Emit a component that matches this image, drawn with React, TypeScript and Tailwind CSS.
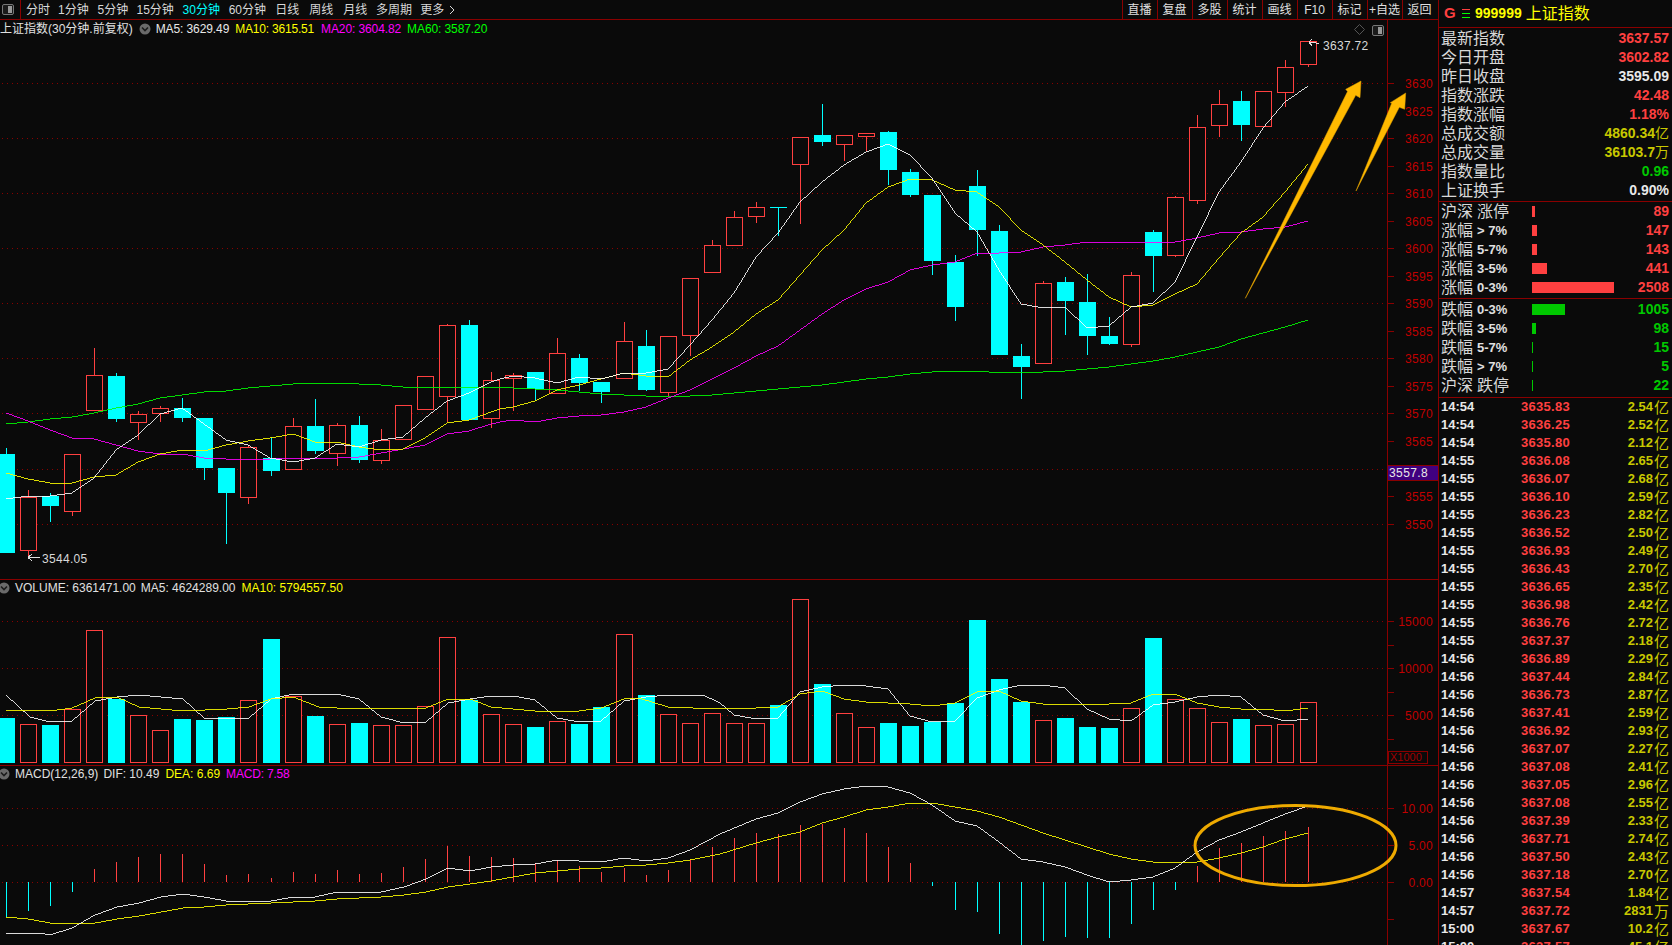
import React from "react";

type Candle = [number, 0 | 1, number, number, number, number];
// [center x, 1 = up (hollow red) / 0 = down (solid cyan), body top, body bottom, high, low]
const candles: Candle[] = [
  [6,0,454,553,448,553],[28,1,497,550,490,557],[50,0,496,506,493,522],[72,1,454,511,454,516],[94,1,375,410,348,410],
  [116,0,376,419,373,422],[138,1,414,422,411,440],[160,1,408,413,406,422],[182,0,408,418,398,422],[204,0,418,468,418,480],
  [226,0,468,493,468,544],[248,1,447,497,445,504],[271,0,458,471,437,476],[293,1,426,469,418,469],[315,0,426,451,399,454],
  [337,1,425,453,423,466],[359,0,425,460,416,463],[381,1,440,460,429,464],[403,1,405,439,405,440],[425,1,376,409,376,409],
  [447,1,325,396,324,422],[469,0,325,420,320,420],[491,1,380,418,372,428],[513,1,375,378,373,411],[535,0,372,389,372,401],
  [557,1,353,393,338,393],[579,0,358,383,354,391],[601,0,382,392,382,403],[624,1,341,378,322,378],[646,0,346,390,330,391],
  [668,1,336,392,336,396],[690,1,278,335,278,356],[712,1,245,272,240,272],[734,1,217,245,211,245],[756,1,207,216,202,223],
  [778,0,207,208,207,236],[800,1,137,164,137,224],[822,0,135,142,104,146],[844,1,135,144,135,161],[866,1,133,136,133,151],
  [888,0,132,170,131,185],[910,0,172,195,169,197],[932,0,195,261,195,275],[955,0,262,307,255,321],[977,0,186,230,170,256],
  [999,0,231,355,225,355],[1021,0,356,367,344,399],[1043,1,283,363,281,363],[1065,0,282,301,277,335],[1087,0,302,336,274,355],
  [1109,0,336,344,317,345],[1131,1,275,344,272,347],[1153,0,232,256,230,292],[1175,1,197,255,196,257],[1197,1,127,200,115,204],
  [1219,1,104,125,90,137],[1241,0,101,125,91,141],[1263,1,91,126,91,126],[1285,1,67,92,60,107],[1308,1,41,64,41,67],
];

const volTops = [718,724,725,709,630,699,715,730,719,720,717,700,639,696,716,724,723,725,725,706,637,700,714,724,727,721,724,707,634,695,714,723,713,723,723,705,599,684,713,727,723,726,722,703,620,679,702,720,718,727,728,708,638,699,708,722,719,725,724,702];
const macdEnds = [917,911,906,892,869,862,857,854,854,864,875,874,878,872,874,870,874,873,867,859,846,856,857,858,863,860,866,872,868,875,870,859,847,838,833,834,825,824,828,833,847,863,886,910,912,934,945,941,937,938,938,924,910,890,866,848,843,836,831,827];

const ma5 = "6,499 28,496 50,496 72,493 94,478 116,450 138,435 160,414 182,408 204,424 226,440 248,445 270,458 293,462 315,458 337,444 359,447 381,440 403,437 425,418 447,401 469,393 491,382 500,379 513,376 535,378 557,383 579,377 601,379 624,373 646,373 668,369 690,345 712,320 734,293 756,257 778,233 800,202 822,182 844,165 866,152 888,144 910,155 932,178 955,213 977,232 999,270 1021,304 1043,308 1065,307 1087,328 1109,326 1131,307 1153,303 1175,282 1197,237 1219,192 1241,162 1263,128 1285,102 1308,86";
const ma10 = "6,473 28,479 50,483 72,483 94,477 116,475 138,462 160,454 182,450 204,451 226,445 248,441 270,438 293,434 315,442 337,442 359,447 381,450 403,449 425,438 447,423 469,420 491,412 500,409 513,407 535,401 557,390 579,385 601,379 624,373 646,376 668,377 690,360 712,347 734,332 756,314 778,300 800,275 822,250 844,230 866,203 888,187 910,179 932,180 955,190 977,192 999,207 1021,230 1043,245 1065,262 1087,280 1109,297 1131,307 1153,305 1175,294 1197,284 1219,258 1241,233 1263,217 1285,192 1308,164";
const ma20 = "6,413 28,421 50,430 72,438 94,439 116,445 138,451 160,454 182,454 204,458 226,459 248,460 270,459 293,458 315,459 337,458 359,457 381,453 403,449 425,445 447,434 469,431 491,424 500,422 513,420 535,422 557,418 579,416 601,415 624,412 646,407 668,398 690,390 712,379 734,368 756,356 778,346 800,330 822,314 844,300 866,289 888,282 910,270 932,265 955,262 977,253 999,253 1021,252 1043,247 1065,245 1087,242 1109,242 1131,242 1153,242 1175,242 1197,238 1219,233 1241,232 1263,229 1285,227 1308,221";
const ma60 = "6,424 28,422 50,419 72,417 94,413 116,408 138,404 160,398 182,395 204,392 226,391 248,388 270,386 293,384 315,383 337,383 359,384 381,385 403,387 425,387 447,387 469,387 491,387 513,388 535,389 557,390 579,392 601,394 624,395 646,396 668,397 690,396 712,395 734,393 756,391 778,389 800,387 822,385 844,382 866,379 888,377 910,374 932,372 966,371 989,372 1021,373 1043,372 1065,371 1087,369 1109,367 1131,364 1153,361 1175,357 1197,352 1219,347 1241,339 1263,333 1285,327 1308,320";

const volMa5 = "6,695 30,717 50,722 72,721 95,701 117,697 139,695 161,697 183,699 204,718 227,719 249,718 271,699 293,694 337,694 359,699 381,717 404,723 426,722 448,703 470,699 491,696 513,696 535,700 557,718 579,722 601,721 624,701 646,697 668,695 703,695 720,703 734,715 756,719 778,718 800,692 822,687 844,685 866,686 888,689 910,716 932,722 955,721 977,698 999,690 1021,685 1043,685 1065,688 1087,709 1109,719 1131,721 1153,705 1175,702 1197,697 1219,695 1241,697 1263,715 1285,721 1308,719";
const volMa10 = "6,710 50,711 72,708 95,698 117,697 139,707 161,709 183,711 227,709 249,707 271,699 293,697 319,707 337,708 395,709 426,708 448,699 470,699 491,707 513,709 535,711 579,711 601,708 624,699 639,698 668,707 693,708 756,708 778,707 800,694 822,691 844,699 866,702 910,704 932,706 955,703 977,692 999,691 1021,701 1043,704 1109,704 1131,703 1153,694 1175,694 1197,703 1219,707 1241,709 1263,709 1285,711 1308,708";

const dif = "6,933 40,933 50,935 72,928 95,915 117,907 139,903 161,897 183,894 204,897 226,901 271,901 293,897 315,897 337,892 359,893 381,892 404,887 426,879 448,868 470,871 491,867 513,865 535,864 557,860 579,861 601,862 624,858 646,861 668,858 690,850 720,834 756,819 778,813 800,802 822,794 844,789 866,786 888,787 910,793 932,805 955,821 977,826 999,842 1021,859 1043,862 1065,867 1087,875 1109,882 1131,880 1153,877 1175,868 1197,852 1219,840 1241,832 1263,823 1285,814 1308,806";
const dea = "6,917 28,919 50,923 72,924 95,923 117,919 139,916 161,912 183,908 204,907 226,905 248,904 271,903 293,902 315,901 337,899 359,898 381,897 404,895 426,892 448,887 470,884 491,881 513,877 535,873 557,871 579,869 601,868 624,866 646,865 668,863 690,860 720,854 756,843 778,837 800,832 822,823 844,817 866,810 888,807 910,803 932,803 955,807 977,811 999,817 1021,825 1043,833 1065,840 1087,847 1109,854 1131,859 1153,862 1175,863 1197,862 1219,858 1241,853 1263,847 1285,839 1308,833";

const priceLabels: [string, number][] = [
  ["3630",83],["3625",111],["3620",138],["3615",166],["3610",193],["3605",221],["3600",248],["3595",276],["3590",303],
  ["3585",331],["3580",358],["3575",386],["3570",413],["3565",441],["3555",496],["3550",524],
];

const stats: [string, string, string, string?][] = [
  ["最新指数","3637.57","text-[#ff4040]"],["今日开盘","3602.82","text-[#ff4040]"],["昨日收盘","3595.09","text-[#e8e8e8]"],
  ["指数涨跌","42.48","text-[#ff4040]"],["指数涨幅","1.18%","text-[#ff4040]"],["总成交额","4860.34","text-[#c8c800]","亿"],
  ["总成交量","36103.7","text-[#c8c800]","万"],["指数量比","0.96","text-[#00c800]"],["上证换手","0.90%","text-[#e8e8e8]"],
];

const upRows: [string, string, string, string][] = [
  ["沪深","涨停","w-[3px]","89"],["涨幅","> 7%","w-[5px]","147"],["涨幅","5-7%","w-[5px]","143"],["涨幅","3-5%","w-[15px]","441"],["涨幅","0-3%","w-[82px]","2508"],
];
const downRows: [string, string, string, string][] = [
  ["跌幅","0-3%","w-[33px]","1005"],["跌幅","3-5%","w-[4px]","98"],["跌幅","5-7%","w-[1px]","15"],["跌幅","> 7%","w-[1px]","5"],["沪深","跌停","w-[1px]","22"],
];

const ticks: [string, string, string, string][] = [
  ["14:54","3635.83","2.54","亿"],["14:54","3636.25","2.52","亿"],["14:54","3635.80","2.12","亿"],["14:55","3636.08","2.65","亿"],
  ["14:55","3636.07","2.68","亿"],["14:55","3636.10","2.59","亿"],["14:55","3636.23","2.82","亿"],["14:55","3636.52","2.50","亿"],
  ["14:55","3636.93","2.49","亿"],["14:55","3636.43","2.70","亿"],["14:55","3636.65","2.35","亿"],["14:55","3636.98","2.42","亿"],
  ["14:55","3636.76","2.72","亿"],["14:55","3637.37","2.18","亿"],["14:56","3636.89","2.29","亿"],["14:56","3637.44","2.84","亿"],
  ["14:56","3636.73","2.87","亿"],["14:56","3637.41","2.59","亿"],["14:56","3636.92","2.93","亿"],["14:56","3637.07","2.27","亿"],
  ["14:56","3637.08","2.41","亿"],["14:56","3637.05","2.96","亿"],["14:56","3637.08","2.55","亿"],["14:56","3637.39","2.33","亿"],
  ["14:56","3637.71","2.74","亿"],["14:56","3637.50","2.43","亿"],["14:56","3637.18","2.70","亿"],["14:57","3637.54","1.84","亿"],
  ["14:57","3637.72","2831","万"],["15:00","3637.67","10.2","亿"],["15:00","3637.57","45.1","亿"],
];

const tabs: [string, string][] = [
  ["分时","ml-0"],["1分钟","ml-[8px]"],["5分钟","ml-[8.8px]"],["15分钟","ml-[8.3px]"],["30分钟","ml-[8.7px]"],["60分钟","ml-[8.8px]"],
  ["日线","ml-[9.1px]"],["周线","ml-[10px]"],["月线","ml-[10px]"],["多周期","ml-[8.7px]"],["更多","ml-[8.3px]"],
];
const tools = ["直播","复盘","多股","统计","画线","F10","标记","+自选","返回"];

const RED = "#ff4040";
const CYAN = "#00ffff";
const AXIS = "#c00000";
const GRID = "#8a0000";

const Line = ({ p, c }: { p: string; c: string }) => (
  <polyline points={p} fill="none" stroke={c} strokeWidth={0.85} shapeRendering="crispEdges" />
);
const Dots = ({ y, x2 = 1387 }: { y: number; x2?: number }) => (
  <line x1={2} x2={x2} y1={y + 0.5} y2={y + 0.5} stroke={GRID} strokeDasharray="1 4" shapeRendering="crispEdges" />
);
const Tick = ({ y, l = 6 }: { y: number; l?: number }) => (
  <line x1={1388} x2={1388 + l} y1={y + 0.5} y2={y + 0.5} stroke={GRID} shapeRendering="crispEdges" />
);
const AxisText = ({ y, t, x = 1433 }: { y: number; t: string; x?: number }) => (
  <text x={x} y={y + 4.5} textAnchor="end" fill={AXIS} fontSize={12} letterSpacing={0.3} fontFamily="'Liberation Sans', sans-serif">{t}</text>
);
const AxisRule = ({ y1, y2 }: { y1: number; y2: number }) => (
  <line x1={1387.5} x2={1387.5} y1={y1} y2={y2} stroke={GRID} shapeRendering="crispEdges" />
);

const Chevron = () => (
  <svg width="12" height="12" viewBox="0 0 12 12" className="shrink-0">
    <circle cx="6" cy="6" r="5.5" fill="#6a6a6a" />
    <path d="M3 4.5 L6 7.5 L9 4.5" fill="none" stroke="#1c1c1c" strokeWidth="1.6" />
  </svg>
);
const PanelToggle = () => (
  <svg width="12" height="11" viewBox="0 0 12 11" className="shrink-0">
    <rect x="0.5" y="0.5" width="11" height="10" rx="1.5" fill="#1a1a1a" stroke="#777" />
    <rect x="6" y="2" width="4" height="7" fill="#999" />
  </svg>
);

function MainChart() {
  const gridYs = [83, 138, 193, 248, 303, 358, 413, 469, 524];
  return (
    <svg width="1438" height="560" viewBox="0 20 1438 560" className="absolute inset-0">
      {gridYs.map((y) => <Dots key={y} y={y} />)}
      <AxisRule y1={20} y2={580} />
      {priceLabels.map(([t, y]) => <Tick key={t} y={y} />)}
      <Tick y={469} />
      {priceLabels.map(([t, y]) => <AxisText key={t} t={t} y={y} />)}
      {candles.map(([c, up, t, b, h, l], i) => {
        const col = up ? RED : CYAN;
        return (
          <g key={i} shapeRendering="crispEdges">
            <line x1={c + 0.5} x2={c + 0.5} y1={h} y2={l} stroke={col} />
            {up ? (
              <rect x={c - 7.5} y={t + 0.5} width={16} height={b - t} fill="#0a0a0a" stroke={RED} />
            ) : (
              <rect x={c - 8} y={t} width={17} height={Math.max(b - t, 1)} fill={CYAN} />
            )}
          </g>
        );
      })}
      <Line p={ma60} c="#00ff00" />
      <Line p={ma20} c="#ff00ff" />
      <Line p={ma10} c="#ffff00" />
      <Line p={ma5} c="#ffffff" />
      <path d="M1319 44 L1313 42 L1309 42 M1309 42 L1312 39 M1309 42 L1312 46" fill="none" stroke="#e0e0e0" strokeWidth="1" shapeRendering="crispEdges" />
      <text x={1323} y={50} fill="#d8d8d8" fontSize={12} letterSpacing={0.3} fontFamily="'Liberation Sans', sans-serif">3637.72</text>
      <path d="M40 557.5 L28 557.5 M28 557.5 L32 554 M28 557.5 L32 561" fill="none" stroke="#e0e0e0" strokeWidth="1" shapeRendering="crispEdges" />
      <text x={42} y={563} fill="#d8d8d8" fontSize={12} letterSpacing={0.3} fontFamily="'Liberation Sans', sans-serif">3544.05</text>
      <path d="M1359.5 24.5 L1364.5 29.5 L1359.5 34.5 L1354.5 29.5 Z" fill="none" stroke="#555" />
      <polygon points="1245.3,298.3 1347.5,91.5 1345.7,89.3 1361,81 1360,97.7 1355.7,95.3" fill="#ffb900" stroke="#e0a000" strokeWidth="0.5" />
      <polygon points="1356,191 1391.7,103.3 1390.3,102.7 1405.7,93 1404.7,109.3 1399.3,107.3" fill="#ffb900" stroke="#e0a000" strokeWidth="0.5" />
    </svg>
  );
}

function VolumeChart() {
  return (
    <svg width="1438" height="186" viewBox="0 580 1438 186" className="absolute inset-0">
      {[621, 668, 715].map((y) => <Dots key={y} y={y} />)}
      <AxisRule y1={580} y2={765} />
      {[621, 645, 668, 692, 715, 739].map((y) => <Tick key={y} y={y} />)}
      <AxisText t="15000" y={621} />
      <AxisText t="10000" y={668} />
      <AxisText t="5000" y={715} />
      {candles.map(([c, up], i) =>
        up ? (
          <rect key={i} x={c - 7.5} y={volTops[i] + 0.5} width={16} height={762 - volTops[i]} fill="#0a0a0a" stroke={RED} shapeRendering="crispEdges" />
        ) : (
          <rect key={i} x={c - 8} y={volTops[i]} width={17} height={763 - volTops[i]} fill={CYAN} shapeRendering="crispEdges" />
        )
      )}
      <Line p={volMa5} c="#ffffff" />
      <Line p={volMa10} c="#ffff00" />
      <rect x={1388.5} y={751.5} width={39} height={12} fill="#0a0a0a" stroke={GRID} shapeRendering="crispEdges" />
      <text x={1390} y={761} fill="#a00000" fontSize={11} fontFamily="'Liberation Sans', sans-serif">X1000</text>
    </svg>
  );
}

function MacdChart() {
  return (
    <svg width="1438" height="179" viewBox="0 766 1438 179" className="absolute inset-0">
      {[808, 845, 882].map((y) => <Dots key={y} y={y} />)}
      <AxisRule y1={766} y2={945} />
      {[808, 845, 882, 919].map((y) => <Tick key={y} y={y} />)}
      <AxisText t="10.00" y={808} />
      <AxisText t="5.00" y={845} />
      <AxisText t="0.00" y={882} />
      {candles.map(([c], i) => (
        <line key={i} x1={c + 0.5} x2={c + 0.5} y1={882} y2={macdEnds[i]} stroke={macdEnds[i] > 882 ? CYAN : RED} shapeRendering="crispEdges" />
      ))}
      <Line p={dea} c="#ffff00" />
      <Line p={dif} c="#ffffff" />
      <ellipse cx={1295.5} cy={845.5} rx={100.5} ry={40} fill="none" stroke="#eeaa00" strokeWidth={3} />
    </svg>
  );
}

const Legend = ({ children, h }: { children: React.ReactNode; h: string }) => (
  <div className={`absolute left-0 top-0 flex items-center whitespace-nowrap text-[12px] ${h}`}>{children}</div>
);

export default function App() {
  return (
    <div className="relative flex h-[945px] w-[1672px] overflow-hidden bg-[#0a0a0a] font-['Liberation_Sans','Noto_Sans_CJK_SC',sans-serif] text-[#e0e0e0]">
      <div className="flex w-[1438px] shrink-0 flex-col">
        <div className="flex h-[20px] shrink-0 items-center border-b border-[#8a0000] text-[12px]">
          <div className="flex h-full w-[21px] shrink-0 items-center border-r border-[#8a0000] pl-[2px]">
            <PanelToggle />
          </div>
          <div className="ml-[5px] flex items-center">
            {tabs.map(([t, m]) => (
              <span key={t} className={`${m} ${t === "30分钟" ? "text-[#00ffff]" : "text-[#d8d8d8]"}`}>{t}</span>
            ))}
            <svg width="6" height="10" viewBox="0 0 6 10" className="ml-[5px]">
              <path d="M1 1 L5 5 L1 9" fill="none" stroke="#d8d8d8" />
            </svg>
          </div>
          <div className="ml-auto flex h-full">
            {tools.map((t) => (
              <span key={t} className="flex h-full w-[35px] items-center justify-center border-l border-[#8a0000] text-[#e0e0e0]">{t}</span>
            ))}
            <span className="w-[1.5px]" />
          </div>
        </div>

        <div className="relative h-[560px] shrink-0 border-b border-[#8a0000]">
          <MainChart />
          <Legend h="h-[18px]">
            <span className="text-[#e0e0e0]">上证指数(30分钟.前复权)</span>
            <span className="ml-[6px] mr-[5px]"><Chevron /></span>
            <span className="tracking-[-0.1px] text-[#e8e8e8]">MA5: 3629.49</span>
            <span className="ml-[6px] tracking-[-0.2px] text-[#ffff00]">MA10: 3615.51</span>
            <span className="ml-[7px] tracking-[-0.1px] text-[#ff00ff]">MA20: 3604.82</span>
            <span className="ml-[6px] tracking-[-0.1px] text-[#00ff00]">MA60: 3587.20</span>
          </Legend>
          <div className="absolute left-[1372px] top-[5px]"><PanelToggle /></div>
        </div>

        <div className="relative h-[186px] shrink-0 border-b border-[#8a0000]">
          <VolumeChart />
          <Legend h="h-[16px]">
            <span className="-ml-[2px] mr-[5px]"><Chevron /></span>
            <span className="text-[#e0e0e0]">VOLUME: 6361471.00</span>
            <span className="ml-[5px] text-[#e0e0e0]">MA5: 4624289.00</span>
            <span className="ml-[6px] text-[#ffff00]">MA10: 5794557.50</span>
          </Legend>
        </div>

        <div className="relative flex-1">
          <MacdChart />
          <Legend h="h-[16px]">
            <span className="-ml-[2px] mr-[5px]"><Chevron /></span>
            <span className="text-[#e0e0e0]">MACD(12,26,9)</span>
            <span className="ml-[5px] text-[#e0e0e0]">DIF: 10.49</span>
            <span className="ml-[6px] text-[#ffff00]">DEA: 6.69</span>
            <span className="ml-[6px] tracking-[-0.2px] text-[#ff00ff]">MACD: 7.58</span>
          </Legend>
        </div>
      </div>

      <div className="flex w-[234px] shrink-0 flex-col overflow-hidden border-l border-[#8a0000]">
        <div className="flex h-[28px] shrink-0 items-center border-b border-[#8a0000] pl-[5px]">
          <span className="w-[13px] text-[15px] font-bold text-[#ff4040]">G</span>
          <svg width="8" height="10" viewBox="0 0 8 10" className="ml-[5px]">
            <rect x="0" y="0" width="8" height="1" fill="#ff4040" />
            <rect x="0" y="4" width="8" height="1" fill="#00ff00" />
            <rect x="0" y="8" width="8" height="1" fill="#00ff00" />
          </svg>
          <span className="ml-[5px] text-[14px] font-bold text-[#ffff00]">999999</span>
          <span className="ml-[4px] text-[16px] text-[#ffff00]">上证指数</span>
        </div>

        <div className="flex h-[174px] shrink-0 flex-col border-b border-[#8a0000] pt-[1px]">
          {stats.map(([l, v, c, u]) => (
            <div key={l} className="flex h-[19px] shrink-0 items-center justify-between pl-[2px] pr-[3px]">
              <span className="text-[16px] leading-[19px] text-[#d8d8d8]">{l}</span>
              <span className={`flex items-center text-[14px] font-bold ${c}`}>
                {v}
                {u && <span className="text-[14px] font-normal">{u}</span>}
              </span>
            </div>
          ))}
        </div>

        <div className="h-[97px] shrink-0 border-b border-[#8a0000]">
          {upRows.map(([a, b, w, n]) => (
            <div key={a + b} className="flex h-[19px] items-center pl-[2px] pr-[3px]">
              <span className="w-[36px] text-[16px] text-[#d8d8d8]">{a}</span>
              <span className={`w-[55px] ${/[涨跌]/.test(b) ? "text-[16px] text-[#d8d8d8]" : "text-[13px] font-bold text-[#e0e0e0]"}`}>{b}</span>
              <span className={`h-[11px] ${w} bg-[#ff4040]`} />
              <span className="ml-auto text-[14px] font-bold text-[#ff4040]">{n}</span>
            </div>
          ))}
        </div>

        <div className="h-[99px] shrink-0 border-b border-[#8a0000] pt-[1px]">
          {downRows.map(([a, b, w, n]) => (
            <div key={a + b} className="flex h-[19px] items-center pl-[2px] pr-[3px]">
              <span className="w-[36px] text-[16px] text-[#d8d8d8]">{a}</span>
              <span className={`w-[55px] ${/[涨跌]/.test(b) ? "text-[16px] text-[#d8d8d8]" : "text-[13px] font-bold text-[#e0e0e0]"}`}>{b}</span>
              <span className={`h-[11px] ${w} bg-[#00c800]`} />
              <span className="ml-auto text-[14px] font-bold text-[#00c800]">{n}</span>
            </div>
          ))}
        </div>

        <div className="flex flex-col">
          {ticks.map(([t, p, a, u], i) => (
            <div key={i} className="flex h-[18px] shrink-0 items-center pl-[2px] pr-[3px] text-[13px] font-bold">
              <span className="w-[80px] text-[#e8e8e8]">{t}</span>
              <span className="tracking-[0.3px] text-[#ff4040]">{p}</span>
              <span className="ml-auto flex items-center text-[#c8c800]">
                {a}
                <span className="ml-[1px] text-[15px] font-normal leading-none">{u}</span>
              </span>
            </div>
          ))}
        </div>
      </div>

      <div className="absolute left-[1388px] top-[465px] flex h-[16px] w-[50px] items-center border-y border-[#8a0000] bg-[#400080] pl-[1px] text-[12px] tracking-[0.4px] text-[#e8e8e8]">3557.8</div>
    </div>
  );
}
